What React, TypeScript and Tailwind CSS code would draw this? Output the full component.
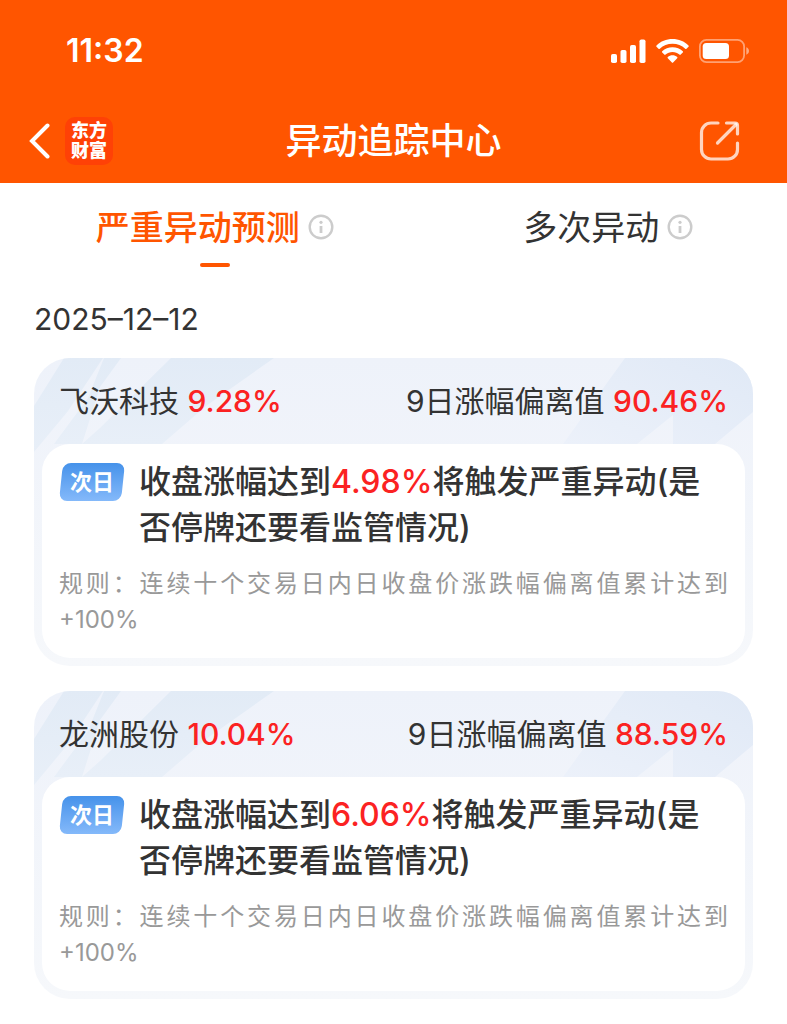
import React from "react";

type Stock = {
  name: string;
  change: string;
  deviation: string;
  trigger: string;
};

const stocks: Stock[] = [
  { name: "飞沃科技", change: "9.28%", deviation: "90.46%", trigger: "4.98%" },
  { name: "龙洲股份", change: "10.04%", deviation: "88.59%", trigger: "6.06%" },
];

const tabs = ["严重异动预测", "多次异动"];

function StatusIcons() {
  return (
    <div className="flex items-center gap-2.5 text-white">
      <svg width="35" height="24" viewBox="0 0 35 24" fill="currentColor" aria-hidden="true">
        <rect x="0" y="15" width="6" height="9" rx="1.8" />
        <rect x="9.5" y="11" width="6" height="13" rx="1.8" />
        <rect x="19" y="6" width="6" height="18" rx="1.8" />
        <rect x="28.5" y="0.5" width="6" height="23.5" rx="1.8" />
      </svg>
      <svg width="33" height="24" viewBox="0 0 33 24" fill="currentColor" aria-hidden="true">
        <path d="M16.5 0C10.3 0 4.600 2.400.5 6.400c-.4.4-.4.9 0 1.300l2 2c.4.400.9.400 1.300 0C7.200 6.500 11.600 4.700 16.500 4.700s9.300 1.800 12.700 5c.4.400.9.400 1.300 0l2-2c.4-.4.4-.9 0-1.300C28.400 2.400 22.700 0 16.500 0Z" />
        <path d="M16.500 8.200c-4 0-7.600 1.500-10.300 4-.4.400-.4.900 0 1.300l2.100 2.100c.4.400.9.400 1.300 0 1.800-1.700 4.200-2.700 6.900-2.700s5.100 1 6.900 2.700c.4.400.9.400 1.300 0l2.100-2.100c.4-.4.4-.9 0-1.300-2.700-2.500-6.300-4-10.300-4Z" />
        <path d="M16.500 16.300c-1.800 0-3.400.6-4.700 1.700-.4.300-.4.800 0 1.200l4.100 4.200c.3.400.9.400 1.200 0l4.100-4.200c.4-.4.4-.9 0-1.200-1.300-1.100-2.900-1.700-4.700-1.700Z" />
      </svg>
      <svg width="50" height="24" viewBox="0 0 50 24" fill="none" aria-hidden="true">
        <rect x="0.900" y="0.900" width="44.200" height="22.200" rx="6.500" stroke="currentColor" strokeOpacity=".45" strokeWidth="1.800" />
        <rect x="3.700" y="3.900" width="26.300" height="16.200" rx="3.600" fill="currentColor" />
        <path d="M47.300 8.300c1.600.6 2.700 2 2.700 3.700s-1.100 3.100-2.700 3.700Z" fill="currentColor" fillOpacity=".5" />
      </svg>
    </div>
  );
}

function InfoButton({ label }: { label: string }) {
  return (
    <button type="button" aria-label={label} className="text-[#cccccc]">
      <svg width="26" height="26" viewBox="0 0 26 26" fill="none" aria-hidden="true">
        <circle cx="13" cy="13" r="11.300" stroke="currentColor" strokeWidth="2.400" />
        <circle cx="13" cy="8.300" r="1.600" fill="currentColor" />
        <path d="M13 12v7" stroke="currentColor" strokeWidth="2.800" />
      </svg>
    </button>
  );
}

// light diagonal streaks behind the card header
function CardBackdrop() {
  return (
    <svg
      className="absolute inset-x-0 top-0 h-40 w-full"
      viewBox="0 0 719 160"
      preserveAspectRatio="none"
      aria-hidden="true"
    >
      <defs>
        <linearGradient id="streakLeft" x1="0" y1="0" x2="0" y2="1">
          <stop offset="0" stopColor="#e2ebf6" />
          <stop offset="1" stopColor="#e8eff8" />
        </linearGradient>
        <linearGradient id="streakRight" x1="0" y1="1" x2="1" y2="0">
          <stop offset="0" stopColor="#ecf1fa" />
          <stop offset="1" stopColor="#e0e9f6" />
        </linearGradient>
      </defs>
      <path d="M30 0H69L34 53 0 94V48Z" fill="url(#streakLeft)" />
      <path d="M70 0H87L66 29 48 86H20L54 40Z" fill="url(#streakLeft)" />
      <path d="M137 0H240L172 48 128 86H48L66 70Z" fill="url(#streakLeft)" />
      <path d="M591 0H719V54L681 86H639V57L603 86H529Z" fill="url(#streakRight)" />
    </svg>
  );
}

function StockCard({ stock }: { stock: Stock }) {
  return (
    <article className="relative overflow-hidden rounded-[36px] bg-linear-to-b from-[#eef2fa] to-[#f6f8fb] px-2 pb-2">
      <CardBackdrop />
      <header className="relative flex h-[86px] items-center justify-between px-[17px] text-[30px]">
        <h2>
          {stock.name} <span className="font-medium text-[#fb2222]">{stock.change}</span>
        </h2>
        <p>
          9日涨幅偏离值 <span className="font-medium text-[#fb2222]">{stock.deviation}</span>
        </p>
      </header>

      <div className="relative rounded-[28px] bg-white px-[17px] pt-[15px] pb-5">
        <div className="flex items-start gap-3.5">
          <span className="relative mt-1 flex h-[38px] w-[66px] shrink-0 items-center justify-center text-[22px] font-bold text-white">
            <span className="absolute inset-x-0.5 inset-y-0 -skew-x-6 rounded-lg bg-linear-to-b from-[#4592ea] to-[#84b9fa]" />
            <span className="relative">次日</span>
          </span>
          <p className="text-[32px] leading-[46px] font-medium">
            收盘涨幅达到<span className="text-[#fb2222]">{stock.trigger}</span>
            将触发严重异动(是否停牌还要看监管情况)
          </p>
        </div>
        <p className="mt-[15px] text-justify text-2xl leading-9 text-[#999999]">
          规则：连续十个交易日内日收盘价涨跌幅偏离值累计达到+100%
        </p>
      </div>
    </article>
  );
}

export default function App() {
  const [active, setActive] = React.useState(0);

  return (
    <div
      lang="zh-CN"
      className="min-h-screen bg-white font-[Inter,'Noto_Sans_CJK_SC',sans-serif] text-[#333333]"
    >
      <header className="bg-[#ff5500] text-white">
        <div className="flex h-[98px] items-center justify-between pt-1 pr-[38px] pl-[66px]">
          <span className="text-[32px] font-semibold">11:32</span>
          <StatusIcons />
        </div>
        <div className="grid h-[85px] grid-cols-[1fr_auto_1fr] items-center px-7">
          <div className="flex items-center gap-3.5">
            <button type="button" aria-label="返回">
              <svg width="23" height="36" viewBox="0 0 23 36" fill="none" aria-hidden="true">
                <path d="M19.500 2.500 4 18l15.500 15.500" stroke="currentColor" strokeWidth="4" strokeLinecap="round" />
              </svg>
            </button>
            <a
              href="#"
              className="flex size-12 flex-col items-center justify-center rounded-[10px] bg-[#ff4106] text-lg leading-5 font-black"
            >
              <span>东方</span>
              <span>财富</span>
            </a>
          </div>
          <h1 className="text-4xl font-medium">异动追踪中心</h1>
          <button type="button" aria-label="分享" className="mr-[18px] justify-self-end text-white/75">
            <svg width="42" height="42" viewBox="0 0 42 42" fill="none" stroke="currentColor" strokeWidth="3.200" strokeLinecap="round" aria-hidden="true">
              <path d="M19 3H12a9.500 9.500 0 0 0-9.500 9.500v17A9.500 9.500 0 0 0 12 39h17a9.500 9.500 0 0 0 9.500-9.500V23" />
              <path d="M27.500 3H36a2.500 2.500 0 0 1 2.500 2.500V14" />
              <path d="M37 4.500 18.500 23" />
            </svg>
          </button>
        </div>
      </header>

      <nav className="grid grid-cols-2 pt-4">
        {tabs.map((tab, i) => (
          <div key={tab} className="flex flex-col items-center pl-9">
            <div className="flex h-14 items-center gap-2">
              <button
                type="button"
                onClick={() => setActive(i)}
                className={
                  active === i
                    ? "text-[34px] font-medium text-[#ff5500]"
                    : "text-[34px]"
                }
              >
                {tab}
              </button>
              <InfoButton label={tab + "说明"} />
            </div>
            {active === i && (
              <span className="mt-2 h-1 w-[30px] rounded-full bg-[#ff5500]" />
            )}
          </div>
        ))}
      </nav>

      <main className="px-[34px] pt-[29px]">
        <time dateTime="2025-12-12" className="block text-[30px] leading-[46px]">
          2025–12–12
        </time>
        <div className="mt-4 flex flex-col gap-[25px]">
          {stocks.map((stock) => (
            <StockCard key={stock.name} stock={stock} />
          ))}
        </div>
      </main>
    </div>
  );
}
